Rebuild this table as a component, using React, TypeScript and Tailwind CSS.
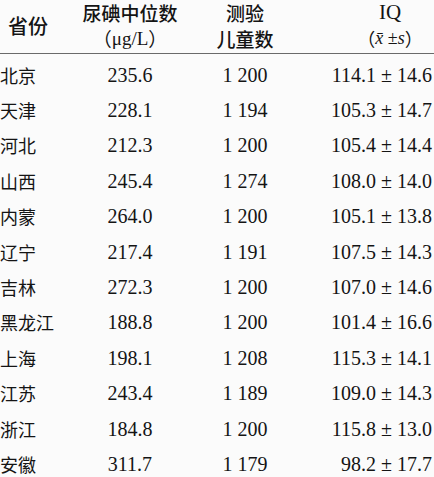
const rows: [string, string, string, string][] = [
  ["北京", "235.6", "1 200", "114.1 ± 14.6"],
  ["天津", "228.1", "1 194", "105.3 ± 14.7"],
  ["河北", "212.3", "1 200", "105.4 ± 14.4"],
  ["山西", "245.4", "1 274", "108.0 ± 14.0"],
  ["内蒙", "264.0", "1 200", "105.1 ± 13.8"],
  ["辽宁", "217.4", "1 191", "107.5 ± 14.3"],
  ["吉林", "272.3", "1 200", "107.0 ± 14.6"],
  ["黑龙江", "188.8", "1 200", "101.4 ± 16.6"],
  ["上海", "198.1", "1 208", "115.3 ± 14.1"],
  ["江苏", "243.4", "1 189", "109.0 ± 14.3"],
  ["浙江", "184.8", "1 200", "115.8 ± 13.0"],
  ["安徽", "311.7", "1 179", "98.2 ± 17.7"],
];

const serif = "font-['Liberation_Serif','Noto_Sans_CJK_SC',serif]";
const cjk = "font-['Noto_Sans_CJK_SC',sans-serif]";

export default function App() {
  return (
    <div className="h-[477px] w-[434px] overflow-hidden bg-[#fbfbfb] text-[#141414]">
      <div className="grid h-[54px] grid-cols-[80px_100px_130px_1fr] grid-rows-[24px_28px] border-b border-[#6a6a6a]">
        <div className={`row-span-2 flex items-center pl-[8px] text-[20px] font-medium leading-none ${cjk}`}>
          省份
        </div>
        <div className={`flex items-center justify-center text-[19px] font-medium leading-none ${cjk}`}>
          尿碘中位数
        </div>
        <div className={`flex items-center justify-center text-[19px] font-medium leading-none ${cjk}`}>
          测验
        </div>
        <div className={`flex items-center justify-center pl-[36px] text-[21px] leading-none ${serif}`}>
          IQ
        </div>
        <div className={`flex items-center justify-center text-[19px] leading-none ${cjk}`}>
          （<span className={serif}>μg/L</span>）
        </div>
        <div className={`flex items-center justify-center text-[19px] font-medium leading-none ${cjk}`}>
          儿童数
        </div>
        <div className={`flex items-center justify-center pl-[36px] text-[18px] leading-none ${cjk}`}>
          （
          <span className={serif}>
            <span className="italic">x̄</span> ±<span className="italic">s</span>
          </span>
          ）
        </div>
      </div>

      <div className="pt-[3px]">
        {rows.map(([province, iodine, count, iq]) => (
          <div
            key={province}
            className="grid h-[35.4px] grid-cols-[80px_100px_130px_1fr] items-center leading-none"
          >
            <div className={`text-[18px] ${cjk}`}>{province}</div>
            <div className={`text-center text-[20px] ${serif}`}>{iodine}</div>
            <div className={`text-center text-[20px] ${serif}`}>{count}</div>
            <div className={`pr-[2px] text-right text-[20px] whitespace-pre ${serif}`}>{iq}</div>
          </div>
        ))}
      </div>
    </div>
  );
}
